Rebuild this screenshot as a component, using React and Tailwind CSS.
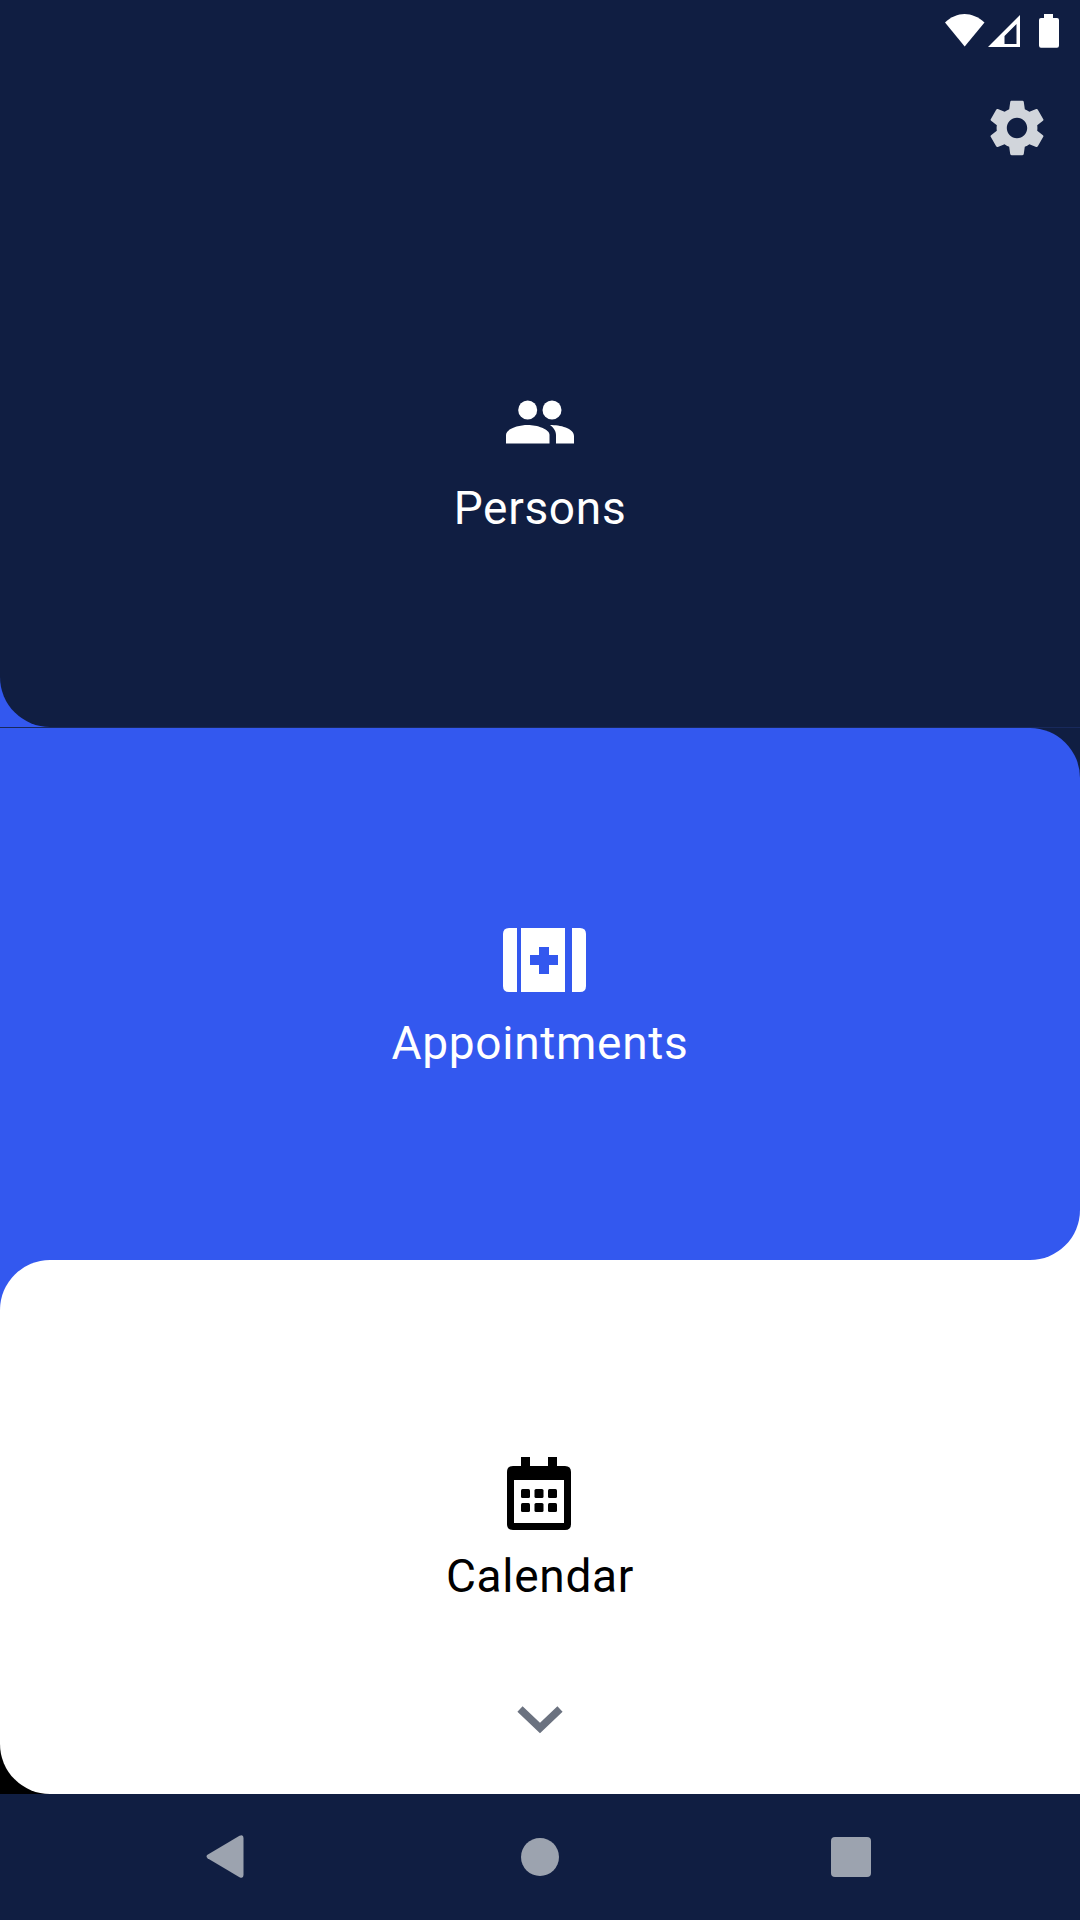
import React from "react";
import { MdSettings } from "react-icons/md";

const label = "font-['Roboto',sans-serif] text-[46px] leading-[54px] font-normal tracking-[0.7px]";

function Status() {
  return (
    <div className="absolute top-0 right-0 w-[140px] h-[60px]">
      <svg width="140" height="60" viewBox="0 0 140 60" fill="#fff">
        <path d="M5 22.5 C 17 11, 32 11, 44.5 22.5 L24.7 46.5 Z" />
        <path fillRule="evenodd" d="M48 47 L80 15 V47 Z M64.5 36 L76.5 24 V44 H64.5 Z" />
        <path d="M99 20 Q99 18 101 18 H104 V14 H113 V18 H117 Q119 18 119 20 V45.5 Q119 47.7 117 47.7 H101 Q99 47.7 99 45.5 Z" />
      </svg>
    </div>
  );
}

function Persons() {
  return (
    <svg width="68" height="44" viewBox="0 0 68 44" fill="#fff">
      <circle cx="21.7" cy="10" r="9.5" />
      <circle cx="46" cy="10" r="9.5" />
      <path d="M0 43.5 V35 C0 29 12 25 21.7 25 C31 25 43.5 29 43.5 35 V43.5 Z" />
      <path d="M44 25 C54 25 68 28 68 36 V43.5 H50 V35 C50 31 47.5 27.5 44 25 Z" />
    </svg>
  );
}

function Appointments() {
  return (
    <svg className="ml-[9px]" width="83" height="64" viewBox="0 0 83 64" fill="#fff">
      <path d="M14 0 V64 H6 Q0 64 0 58 V6 Q0 0 6 0 Z" />
      <path fillRule="evenodd" d="M18 0 H62 V64 H18 Z M36 19 V27 H27 V37 H36 V46 H46 V37 H55 V27 H46 V19 Z" />
      <path d="M69 0 H77 Q83 0 83 6 V58 Q83 64 77 64 H69 Z" />
    </svg>
  );
}

function CalendarIcon() {
  return (
    <svg className="mr-[2px]" width="64" height="73" viewBox="0 0 64 73" fill="#000">
      <path fillRule="evenodd" d="M14 0 H23 V9 H41 V0 H50 V9 H58 Q64 9 64 15 V67 Q64 73 58 73 H6 Q0 73 0 67 V15 Q0 9 6 9 H14 Z M7 23 V66 H57 V23 Z" />
      <rect x="14" y="32" width="9" height="9" rx="1.5" />
      <rect x="27.5" y="32" width="9" height="9" rx="1.5" />
      <rect x="41" y="32" width="9" height="9" rx="1.5" />
      <rect x="14" y="46" width="9" height="9" rx="1.5" />
      <rect x="27.5" y="46" width="9" height="9" rx="1.5" />
      <rect x="41" y="46" width="9" height="9" rx="1.5" />
    </svg>
  );
}

export default function App() {
  return (
    <div className="w-[1080px] h-[1920px] flex flex-col overflow-hidden relative bg-[#101e42]">
      <section className="h-[728px] bg-[#3358ef] flex flex-col">
        <div className="relative h-[727px] bg-[#101e42] rounded-bl-[50px] flex flex-col items-center pt-[400px] text-white">
          <Status />
          <div className="absolute top-[94px] right-[29px] text-[#d1d5db]">
            <MdSettings size={68} />
          </div>
          <Persons />
          <span className={`${label} mt-[37px]`}>Persons</span>
        </div>
        <div className="h-[1px] bg-[#18295c]" />
      </section>

      <section className="h-[532px] bg-[linear-gradient(to_bottom,#101e42_50%,#ffffff_50%)]">
        <div className="h-full bg-[#3358ef] rounded-tr-[50px] rounded-br-[50px] flex flex-col items-center pt-[200px] text-white">
          <Appointments />
          <span className={`${label} mt-[24px]`}>Appointments</span>
        </div>
      </section>

      <section className="h-[534px] bg-[linear-gradient(to_bottom,#3358ef_50%,#000000_50%)]">
        <div className="h-full bg-white rounded-tl-[50px] rounded-bl-[50px] flex flex-col items-center pt-[197px] text-black">
          <CalendarIcon />
          <span className={`${label} mt-[19px]`}>Calendar</span>
          <svg className="mt-[103px]" width="46" height="29" viewBox="0 0 46 29" fill="none">
            <path d="M3 3 L23 22 L43 3" stroke="#6b7280" strokeWidth="7.5" />
          </svg>
        </div>
      </section>

      <nav className="h-[126px] bg-[#101e42] flex items-start">
        <div className="w-full flex items-center pt-[41px] pl-[206px]">
          <svg width="38" height="43" viewBox="0 0 38 43" fill="#9ca3af">
            <path d="M1.5 19.8 L33.5 0.8 Q37.5 -1 37.5 3 V40 Q37.5 44 33.5 42.2 L1.5 23.2 Q-0.5 21.5 1.5 19.8 Z" />
          </svg>
          <div className="ml-[277px] w-[38px] h-[38px] rounded-full bg-[#9ca3af]" />
          <div className="ml-[272px] w-[40px] h-[40px] rounded-[4px] bg-[#9ca3af]" />
        </div>
      </nav>
    </div>
  );
}
